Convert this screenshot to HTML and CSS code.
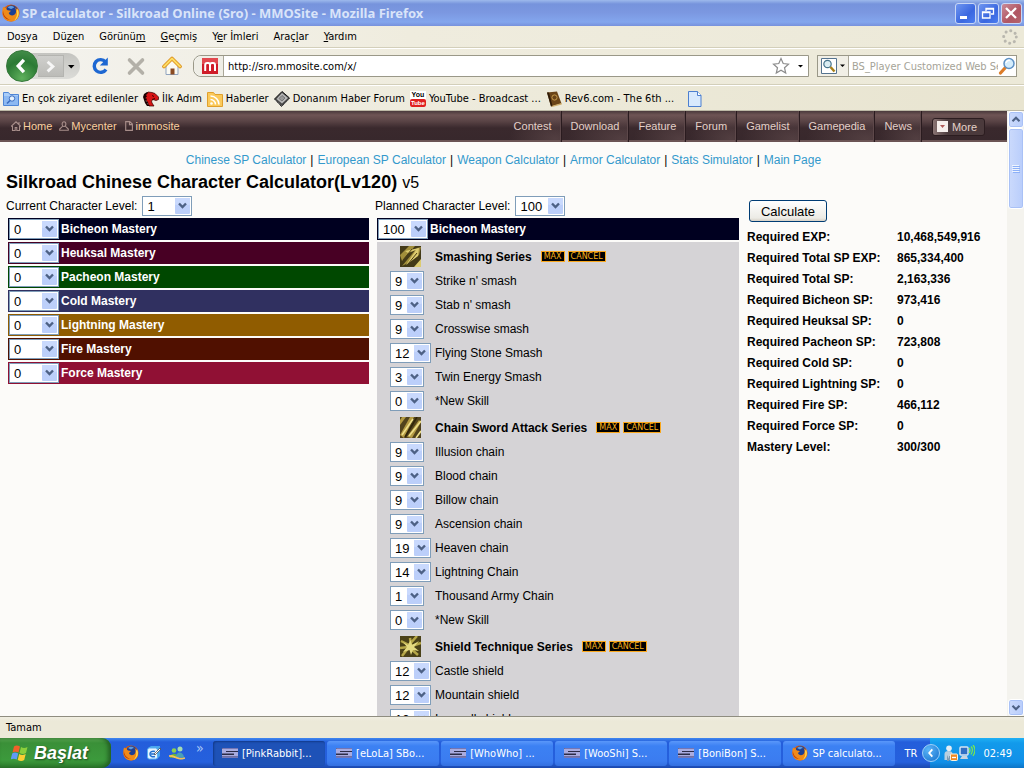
FILE: index.html
```html
<!DOCTYPE html>
<html lang="tr">
<head>
<meta charset="utf-8">
<title>SP calculator - Silkroad Online (Sro) - MMOSite</title>
<link rel="stylesheet" href="styles.css">
</head>
<body>
<svg class="defs" aria-hidden="true">
  <symbol id="firefox" viewBox="0 0 16 16">
    <circle cx="8" cy="8" r="7.6" fill="#d8590c"/>
    <circle cx="8.6" cy="6.6" r="5.6" fill="#1c3f94"/>
    <path d="M5 3c2-2 5-1.500 6 0-1 0-2 1-3 1.500z" fill="#5c9be0"/>
    <path d="M1 2.500c.8.800 2 .9 3 .8C3.600 4.300 4 5 5 5.500L8 6 6 8c.5 2.500 4.500 3 6 .5.800-1.500.7-3.500-.5-5.500 4.500 3 4.500 8 1.500 10.800C9 17 2 15.500.700 10 0 7 .4 4.500 1 2.500z" fill="#f08a18"/>
    <path d="M14 4c2 4.500.5 9-3.500 11 2-2 3.500-5 2.500-8.500z" fill="#ffd54a"/>
    <path d="M1 6c0 4 3 7.500 7 8-5 .5-8-4-7-8z" fill="#b83408"/>
  </symbol>
  <symbol id="swin" viewBox="0 0 16 16">
    <path d="M0 3h16v10H0z" fill="#2c2c48"/>
    <path d="M1 3h15v3H4v1h12v4.500H0V10h12V8.500H0V4z" fill="#a9abdf"/>
    <path d="M1 3h15v1H1zM0 11.500h16V13H0z" fill="#7476b4"/>
  </symbol>
</svg>
<div class="window">
  <header class="titlebar">
    <svg class="i18"><use href="#firefox"/></svg>
    <span class="title">SP calculator - Silkroad Online (Sro) - MMOSite - Mozilla Firefox</span>
    <button class="wbtn" aria-label="Minimize"><svg viewBox="0 0 18 18"><path d="M4 12h7v3H4z" fill="#fff"/></svg></button>
    <button class="wbtn" aria-label="Restore"><svg viewBox="0 0 18 18"><path d="M7 7V4.500h7.500V10H12M7 5h7.500M3.500 8h7.500v6H3.500zM3.500 8.700h7.500" fill="none" stroke="#fff" stroke-width="1.300"/></svg></button>
    <button class="wbtn close" aria-label="Close"><svg viewBox="0 0 18 18"><path d="M4 4l10 10M14 4L4 14" stroke="#fff" stroke-width="2.300"/></svg></button>
  </header>
  <nav class="menubar">
    <button>Do<u>s</u>ya</button><button>Dü<u>z</u>en</button><button>Görünü<u>m</u></button><button><u>G</u>eçmiş</button><button>Y<u>e</u>r İmleri</button><button>Araç<u>l</u>ar</button><button><u>Y</u>ardım</button>
    <svg class="throbber" viewBox="0 0 16 16"><circle cx="8" cy="8" r="6.300" fill="none" stroke="#b9b7ae" stroke-width="3" stroke-linecap="round" stroke-dasharray="0.100 4.848"/></svg>
  </nav>
  <div class="toolbar">
    <div class="history">
      <button class="back" aria-label="Back"><svg viewBox="0 0 32 32"><path d="M18 9.500l-6 6.500 6 6.500" fill="none" stroke="#fff" stroke-width="3.600"/></svg></button>
      <button class="fwd" aria-label="Forward"><svg viewBox="0 0 26 22"><path d="M10 6l5.500 5-5.500 5" fill="none" stroke="#f6f6f6" stroke-width="3"/></svg></button>
      <button class="drop" aria-label="History"><svg viewBox="0 0 14 14"><path d="M4 6h6.500L7.200 9.500z"/></svg></button>
    </div>
    <button class="tb" aria-label="Reload"><svg viewBox="0 0 20 20"><path d="M15.500 5.800A6.400 6.400 0 1 0 16 13.500" fill="none" stroke="#1d67d2" stroke-width="3.400"/><path d="M17.800 1.500v8h-8z" fill="#1d67d2"/></svg></button>
    <button class="tb" aria-label="Stop"><svg viewBox="0 0 20 20"><path d="M3.500 4l13 13M16.500 4l-13 13" stroke="#b3b0a8" stroke-width="3.600" stroke-linecap="round"/></svg></button>
    <button class="tb" aria-label="Home"><svg viewBox="0 0 20 20"><path d="M4 10v8.500h12V10l-6-6z" fill="#fbfaf2" stroke="#8fa3bf"/><path d="M8.500 12.500h4v6h-4z" fill="#8a4b22"/><path d="M10 2.500L2 10.500M10 2.500l8 8" stroke="#d98a13" stroke-width="3.600" stroke-linecap="round"/><path d="M10 2.500l-8 8M10 2.500l8 8" stroke="#fddc62" stroke-width="2" stroke-linecap="round"/></svg></button>
    <div class="urlbar">
      <span class="favicon"><svg viewBox="0 0 16 16"><path d="M0 0h16v16H0z" fill="#cf1c28"/><path d="M0 0h16v6H0z" fill="#e2484e"/><path d="M3.200 13V7q0-2 2-2h1q1.800 0 1.800 2v6M8 7q0-2 2-2h1q2 0 2 2v6" fill="none" stroke="#fff" stroke-width="2"/></svg></span>
      <input class="url" aria-label="Address" value="http://sro.mmosite.com/x/">
      <svg class="i18" viewBox="0 0 18 18"><path d="M9 1.500l2.200 5 5.300.6-4 3.600 1.200 5.300L9 13.300 4.300 16l1.200-5.300-4-3.600 5.300-.6z" fill="#fff" stroke="#8c8c8c" stroke-width="1.200"/></svg>
      <svg class="arrow" viewBox="0 0 14 14"><path d="M5 6h5L7.500 8.500z"/></svg>
    </div>
    <div class="search">
      <span class="engine"><svg class="i16" viewBox="0 0 16 16"><path d="M.5.500h15v15H.500z" fill="#fff" stroke="#55738f"/><circle cx="6.500" cy="6" r="3.700" fill="#d9ecf2" stroke="#46748c" stroke-width="1.200"/><path d="M9.500 9l4 4.500" stroke="#a8801a" stroke-width="2.500"/></svg><svg class="arrow" viewBox="0 0 10 14"><path d="M3 5.500h5L5.500 8z"/></svg></span>
      <input aria-label="Search" placeholder="BS_Player Customized Web Search">
      <svg class="i18" viewBox="0 0 18 18"><path d="M7 11l-4.500 5" stroke="#dc7c28" stroke-width="3.200" stroke-linecap="round"/><circle cx="11" cy="6.500" r="5" fill="#d5edfc" stroke="#5e91c4" stroke-width="1.500"/><path d="M8 6a3 3 0 0 1 4-2.500" fill="none" stroke="#fff" stroke-width="1.500"/></svg>
    </div>
  </div>
  <nav class="bookmarks">
    <a href="#"><svg class="i16" viewBox="0 0 16 16"><path d="M.5 1.500h5l1.500 2h8.500v11H.500z" fill="#a9cdf8" stroke="#4f86d6"/><path d="M1 5h14v9H1z" fill="#8db9f2"/><circle cx="9" cy="7.500" r="2.700" fill="#e6f2fd" stroke="#3a6cc0"/><path d="M7 9.500l-3 3" stroke="#3a6cc0" stroke-width="1.600"/></svg>En çok ziyaret edilenler</a>
    <a href="#"><svg class="i16" viewBox="0 0 16 16"><path d="M2 4l3-3 4 .5 3 1 3.500 3.500v2.500L13 9.500 10 8.500 8.500 10l.5 2 2 3H6l-1-3-2-3z" fill="#d81414" stroke="#300" stroke-width=".7"/><path d="M0 6l1-3 3-2 1 1-2 2 1 1.500L2 7l2 1-1.500 2L5 11l-.5 2L7 15H4l-2-3-1-3z" fill="#1c0000"/><path d="M9 4.500l2 1M9 8.500l3-1" stroke="#400"/></svg>İlk Adım</a>
    <a href="#"><svg class="i16" viewBox="0 0 16 16"><path d="M.5 1.500h6l1.500 2h7.500v12H.500z" fill="#fbc95a" stroke="#e0a02c"/><path d="M3.500 8.500a5 5 0 0 1 5 5M3.500 5a8.500 8.500 0 0 1 8.500 8.500" fill="none" stroke="#fff" stroke-width="1.600"/><circle cx="4.500" cy="12.500" r="1.300" fill="#fff"/></svg>Haberler</a>
    <a href="#"><svg class="i16" viewBox="0 0 16 16"><path d="M8 .5l7.500 6.500L7.500 15.500 .5 8z" fill="#4c4c4c" stroke="#151515"/><path d="M8 2l6 5-6 5.500L2.500 8z" fill="#b8b8b8"/><path d="M8 4.500l3 2.500-3 3-3-2.500z" fill="#999" stroke="#777"/><path d="M1 9l6.500 6M9 14.500l6-6" stroke="#bbb" stroke-dasharray="1 1"/></svg>Donanım Haber Forum</a>
    <a href="#"><span class="yt"><b>You</b><i>Tube</i></span>YouTube - Broadcast ...</a>
    <a href="#"><svg class="i16" viewBox="0 0 16 16"><path d="M1 1.500L11 .5l4.500 12L5 15.500z" fill="#6b4518"/><path d="M1 1.500l4 14 1.500-.5L3 1.500z" fill="#2f1b08"/><path d="M5.500 15l10-3 .3 1.500L6 16z" fill="#cfae6c"/><circle cx="8.500" cy="6.500" r="2.600" fill="none" stroke="#c69b4a"/></svg>Rev6.com - The 6th ...</a>
    <a href="#" class="blank" aria-label="Page"><svg class="i16" viewBox="0 0 16 16"><path d="M1.500.500h9l3.500 4v11H1.500z" fill="#d8e9fd" stroke="#4c7fd0"/><path d="M10.500.500v4H14" fill="#fff" stroke="#4c7fd0"/></svg></a>
  </nav>
  <div class="viewport">
    <main class="page">
      <header class="sitebar">
        <div class="user">
          <a href="#"><svg viewBox="0 0 10 10"><path d="M0 5.500L5 .8l5 4.700M1.500 5v4.500h2.700V6.500h1.600v3h2.700V5M8 1v2" fill="none" stroke="#a88e8a" stroke-width="1.100"/></svg>Home</a>
          <a href="#"><svg viewBox="0 0 10 10"><path d="M5 .7C2.500.700 2.500 5.500 5 5.500S7.500.700 5 .700zM3.500 5.300L.7 8v1.300h8.600V8L6.500 5.300" fill="none" stroke="#a88e8a" stroke-width="1.100"/></svg>Mycenter</a>
          <a href="#"><svg viewBox="0 0 10 10"><path d="M1.700.600h4L8.400 3v6.400H1.700zM5.500.600v3h3" fill="none" stroke="#a88e8a" stroke-width="1.100"/></svg>immosite</a>
        </div>
        <nav class="sitenav"><a href="#">Contest</a><a href="#">Download</a><a href="#">Feature</a><a href="#">Forum</a><a href="#">Gamelist</a><a href="#">Gamepedia</a><a href="#">News</a></nav>
        <button class="more"><svg viewBox="0 0 11 11"><path d="M0 0h11v11H0z" fill="#f6efec"/><path d="M3 4h5L5.500 7z" fill="#b05a58"/></svg>More</button>
      </header>
      <nav class="calclinks"><a href="#">Chinese SP Calculator</a>|<a href="#">European SP Calculator</a>|<a href="#">Weapon Calculator</a>|<a href="#">Armor Calculator</a>|<a href="#">Stats Simulator</a>|<a href="#">Main Page</a></nav>
      <h1>Silkroad Chinese Character Calculator(Lv120) <small>v5</small></h1>
      <div class="columns">
        <section>
          <div class="level"><label for="cur">Current Character Level:</label><select id="cur" class="wide"><option>1</option></select></div>
          <div class="mastery bicheon"><select id="m1" class="wide"><option>0</option></select><label for="m1">Bicheon Mastery</label></div>
          <div class="mastery heuksal"><select id="m2" class="wide"><option>0</option></select><label for="m2">Heuksal Mastery</label></div>
          <div class="mastery pacheon"><select id="m3" class="wide"><option>0</option></select><label for="m3">Pacheon Mastery</label></div>
          <div class="mastery cold"><select id="m4" class="wide"><option>0</option></select><label for="m4">Cold Mastery</label></div>
          <div class="mastery lightning"><select id="m5" class="wide"><option>0</option></select><label for="m5">Lightning Mastery</label></div>
          <div class="mastery fire"><select id="m6" class="wide"><option>0</option></select><label for="m6">Fire Mastery</label></div>
          <div class="mastery force"><select id="m7" class="wide"><option>0</option></select><label for="m7">Force Mastery</label></div>
        </section>
        <section>
          <div class="level"><label for="plan">Planned Character Level:</label><select id="plan" class="wide"><option>100</option></select></div>
          <div class="mastery bicheon"><select id="p1" class="wide"><option>100</option></select><label for="p1">Bicheon Mastery</label></div>
          <div class="skills">
            <h2><svg viewBox="0 0 21 21"><path d="M0 0h21v21H0z" fill="#433a18"/><path d="M0 9L9 0h6L2 15zM2 20L17 2l4-1-2 8-11 8z" fill="#a18e3b"/><path d="M6 19L16 4l-8 3L5 5l14-3-1 8-8 6zM14 21l7-8v8z" fill="#dccb70"/><path d="M3 14L12 3M8 18l9-11" stroke="#4b3c13"/></svg><span>Smashing Series</span><button>MAX</button><button>CANCEL</button></h2>
            <div class="skill"><select id="s1"><option>9</option></select><label for="s1">Strike n' smash</label></div>
            <div class="skill"><select id="s2"><option>9</option></select><label for="s2">Stab n' smash</label></div>
            <div class="skill"><select id="s3"><option>9</option></select><label for="s3">Crosswise smash</label></div>
            <div class="skill"><select id="s4" class="two"><option>12</option></select><label for="s4">Flying Stone Smash</label></div>
            <div class="skill"><select id="s5"><option>3</option></select><label for="s5">Twin Energy Smash</label></div>
            <div class="skill"><select id="s6"><option>0</option></select><label for="s6">*New Skill</label></div>
            <h2><svg viewBox="0 0 21 21"><path d="M0 0h21v21H0z" fill="#51431c"/><path d="M0 18L10 0h4L4 21zM7 20L19 3l2 2-9 16zM0 8l6-8H2L0 3z" fill="#b49b43"/><path d="M2 18L13 2M9 19L21 4M16 21l5-7" stroke="#eee08b" stroke-width="1.600"/><path d="M5 20L17 0" stroke="#302509" stroke-width="1.500"/></svg><span>Chain Sword Attack Series</span><button>MAX</button><button>CANCEL</button></h2>
            <div class="skill"><select id="c1"><option>9</option></select><label for="c1">Illusion chain</label></div>
            <div class="skill"><select id="c2"><option>9</option></select><label for="c2">Blood chain</label></div>
            <div class="skill"><select id="c3"><option>9</option></select><label for="c3">Billow chain</label></div>
            <div class="skill"><select id="c4"><option>9</option></select><label for="c4">Ascension chain</label></div>
            <div class="skill"><select id="c5" class="two"><option>19</option></select><label for="c5">Heaven chain</label></div>
            <div class="skill"><select id="c6" class="two"><option>14</option></select><label for="c6">Lightning Chain</label></div>
            <div class="skill"><select id="c7"><option>1</option></select><label for="c7">Thousand Army Chain</label></div>
            <div class="skill"><select id="c8"><option>0</option></select><label for="c8">*New Skill</label></div>
            <h2><svg viewBox="0 0 21 21"><path d="M0 0h21v21H0z" fill="#4a4118"/><path d="M1 5l8 4L17 0M2 20l7-9 9 8M0 12l8-1M12 10l9-3M10 2l1 7" fill="none" stroke="#b6a748" stroke-width="2.500"/><path d="M10.500 4l1.500 5 7-4-5 6 5 4-6-1-2 5-1.500-5L3 16l4-5-4-5 5 3z" fill="#e4da80"/></svg><span>Shield Technique Series</span><button>MAX</button><button>CANCEL</button></h2>
            <div class="skill"><select id="t1" class="two"><option>12</option></select><label for="t1">Castle shield</label></div>
            <div class="skill"><select id="t2" class="two"><option>12</option></select><label for="t2">Mountain shield</label></div>
            <div class="skill"><select id="t3" class="two"><option>12</option></select><label for="t3">Ironwall shield</label></div>
          </div>
        </section>
        <section>
          <button class="calc">Calculate</button>
          <table>
            <tr><th>Required EXP:</th><td>10,468,549,916</td></tr>
            <tr><th>Required Total SP EXP:</th><td>865,334,400</td></tr>
            <tr><th>Required Total SP:</th><td>2,163,336</td></tr>
            <tr><th>Required Bicheon SP:</th><td>973,416</td></tr>
            <tr><th>Required Heuksal SP:</th><td>0</td></tr>
            <tr><th>Required Pacheon SP:</th><td>723,808</td></tr>
            <tr><th>Required Cold SP:</th><td>0</td></tr>
            <tr><th>Required Lightning SP:</th><td>0</td></tr>
            <tr><th>Required Fire SP:</th><td>466,112</td></tr>
            <tr><th>Required Force SP:</th><td>0</td></tr>
            <tr><th>Mastery Level:</th><td>300/300</td></tr>
          </table>
        </section>
      </div>
    </main>
    <div class="scrollbar">
      <button class="sb" aria-label="Scroll up"><svg viewBox="0 0 16 16"><path d="M4 10l4-4 4 4" fill="none" stroke="#4d6185" stroke-width="2.400"/></svg></button>
      <div class="thumb"><svg viewBox="0 0 8 8"><path d="M0 .5h7M0 2.500h7M0 4.500h7M0 6.500h7" stroke="#eef4fe"/><path d="M1 1.500h7M1 3.500h7M1 5.500h7M1 7.500h7" stroke="#8cb0f8"/></svg></div>
      <button class="sb down" aria-label="Scroll down"><svg viewBox="0 0 16 16"><path d="M4 6l4 4 4-4" fill="none" stroke="#4d6185" stroke-width="2.400"/></svg></button>
    </div>
  </div>
  <div class="status">Tamam</div>
  <footer class="taskbar">
    <button class="start"><svg viewBox="0 0 18 18"><path d="M3 2.500c2-1.500 4-1 6 0L7.500 8.500c-2-1-4-1.300-6 0z" fill="#f0612a"/><path d="M10 3c2 1.200 4 1.300 6.500 0L15 9c-2 1.200-4 1.200-6.500 0z" fill="#8bcf3c"/><path d="M1.200 9.500c2-1.500 4-1 6 0l-1.500 6c-2-1-4-1.200-6 0z" fill="#5f9bf6"/><path d="M8.200 10c2 1.200 4 1.300 6.500 0l-1.500 6c-2 1.200-4 1.200-6.500 0z" fill="#fbce33"/></svg>Başlat</button>
    <div class="quick">
      <svg class="i16"><use href="#firefox"/></svg>
      <svg class="i16" viewBox="0 0 16 16"><path d="M2 3l3-2h9v10l-3 3H2z" fill="#4aa6ee"/><rect x="1.500" y="3" width="10" height="11" rx="2" fill="#e7f5ff" stroke="#5cb2f0"/><path d="M9 6.500C6 5.500 4 7 4 9s2 3.500 5 2.500M5 9h4" fill="none" stroke="#1f6fd0" stroke-width="1.500"/><path d="M8 9l6-6 1 1-6 6z" fill="#fff" stroke="#222" stroke-width=".6"/></svg>
      <svg class="i16" viewBox="0 0 16 16"><circle cx="5" cy="5.500" r="2.300" fill="#8ed051"/><circle cx="11" cy="4" r="2.500" fill="#a5dcb0"/><path d="M1 13c0-5 7-6 8-1z" fill="#68b53a"/><path d="M7 12c0-6 7-6 8 0v1z" fill="#4aa0b8"/><path d="M0 11c5-2 8 4 16 2-5 3-9-1-16-2z" fill="#ffc454" stroke="#ffc454"/></svg>
    </div>
    <span class="chev">»</span>
    <div class="tasks">
      <button class="task active"><svg><use href="#swin"/></svg>[PinkRabbit]...</button>
      <button class="task"><svg><use href="#swin"/></svg>[eLoLa] SBo...</button>
      <button class="task"><svg><use href="#swin"/></svg>[WhoWho] ...</button>
      <button class="task"><svg><use href="#swin"/></svg>[WooShi] S...</button>
      <button class="task"><svg><use href="#swin"/></svg>[BoniBon] S...</button>
      <button class="task"><svg><use href="#firefox"/></svg>SP calculato...</button>
    </div>
    <span class="lang">TR</span>
    <div class="tray">
      <button class="expand" aria-label="Show hidden icons"><svg viewBox="0 0 18 18"><path d="M10.500 5L7 9l3.500 4" fill="none" stroke="#fff" stroke-width="2"/></svg></button>
      <svg class="i16" viewBox="0 0 16 16"><circle cx="6" cy="3.300" r="2.800" fill="#e5edf4"/><path d="M1.500 15V9q0-3 4-3t4 3v6z" fill="#b9cfdf"/><path d="M4 10v6h2v-5h1v5" fill="#7b9ab2"/><rect x="7.500" y="9" width="7" height="6.500" rx="1" fill="#f08a24" stroke="#fff3dc"/><path d="M9 12.500h4" stroke="#fff" stroke-width="1.300"/></svg>
      <svg class="i16" viewBox="0 0 16 16"><rect x="1" y="2" width="8" height="8" rx="1" fill="#2f6fc4" stroke="#d8e5f2" stroke-width="1.500"/><path d="M3 11h5l1 3H1z" fill="#c7d3df"/><path d="M10 3q2 2 0 5M12 1.500q3 3 0 8M14 0q4 5 0 11" fill="none" stroke="#76e455" stroke-width="1.300"/></svg>
      <time>02:49</time>
    </div>
  </footer>
</div>
</body>
</html>
```
FILE: styles.css
```css
* { box-sizing: border-box; }
body { margin: 0; font: 11px "DejaVu Sans Condensed", "DejaVu Sans", sans-serif; color: #000; }
button, input, select { font: inherit; color: inherit; margin: 0; padding: 0; border: 0; background: none; }
a { color: inherit; text-decoration: none; }
svg { display: block; flex: none; }
.defs { position: absolute; width: 0; height: 0; }
.i16 { width: 16px; height: 16px; }
.i18 { width: 18px; height: 18px; }
.window { display: flex; flex-direction: column; height: 100vh; overflow: hidden; background: #ece9d8; }
.window > * { flex: none; }

.titlebar { display: flex; align-items: center; gap: 2px; height: 26px; padding: 0 2px; background: linear-gradient(#9db9ec 0, #7693dc 4px, #7b97e0 12px, #83a6ed 22px, #7791dc); }
.title { flex: 1; color: #d9e4f9; font: bold 13px "Noto Sans", sans-serif; white-space: nowrap; }
.wbtn { width: 21px; height: 21px; border: 1px solid #c8d7f6; border-radius: 3px; background: linear-gradient(135deg, #6f96f0, #3a67e0 60%, #4b7df0); }
.wbtn svg { width: 18px; height: 18px; }
.wbtn.close { background: linear-gradient(135deg, #c98b98, #b05562 60%, #b4646c); }

.menubar { display: flex; align-items: center; gap: 15px; height: 21px; padding: 0 6px 0 7px; background: linear-gradient(90deg, #f6f5f2, #efecde 40%, #ece9d8); }
.throbber { width: 16px; height: 16px; margin-left: auto; }

.toolbar { display: flex; align-items: center; height: 38px; padding: 0 7px 0 6px; border-top: 1px solid #d3cfba; border-bottom: 1px solid #d3cfba; box-shadow: inset 0 1px #fff; background: linear-gradient(90deg, #f4f3ef, #efecde 40%, #ece9d8); }
.history { display: flex; align-items: center; width: 74px; height: 26px; border-radius: 13px; background: linear-gradient(#c4c4c0, #dcdcd8); margin-right: 10px; }
.back { width: 32px; height: 32px; flex: none; border-radius: 50%; border: 1px solid #35783a; background: radial-gradient(circle at 50% 90%, #5fb05c, #2b7a34 55%, #4b9450); }
.fwd { width: 26px; height: 22px; background: linear-gradient(#cfcfcc, #bcbcb8); border: 1px solid #b4b4b0; border-left: 0; }
.drop { width: 14px; }
.tb { width: 20px; height: 20px; margin-right: 16px; }
.urlbar, .search { display: flex; align-items: center; height: 22px; border: 1px solid #9a9888; background: #fff; }
.urlbar { flex: 1; margin: 0 8px 0 -5px; border-radius: 8px 0 0 8px; }
.favicon { align-self: stretch; display: flex; align-items: center; width: 30px; padding-left: 8px; border-right: 1px solid #aaa798; border-radius: 8px 0 0 8px; background: #efeee6; }
.favicon svg { width: 16px; height: 16px; }
.url { flex: 1; min-width: 0; padding-left: 4px; }
.arrow { width: 14px; height: 14px; margin: 0 1px 0 3px; }
.search { width: 200px; }
.engine { align-self: stretch; display: flex; align-items: center; padding-left: 3px; width: 31px; flex: none; border-right: 1px solid #aaa798; background: #f1efe6; }
.engine .arrow { width: 10px; margin: 0; }
.search input { flex: 1; min-width: 0; padding-left: 3px; }
.search input::placeholder { color: #a5a397; opacity: 1; }

.bookmarks { display: flex; align-items: center; gap: 5px; height: 26px; padding: 2px 3px 0; box-shadow: inset 0 1px #fff; border-bottom: 1px solid #bdb9a6; background: linear-gradient(90deg, #f2f0e8, #ece9d8 60%, #e8e4d0); }
.bookmarks a { display: flex; align-items: center; gap: 3px; white-space: nowrap; }
.bookmarks .blank { margin-left: 8px; }
.yt { width: 16px; font: bold 7px/8px "Liberation Sans", sans-serif; text-align: center; background: #fff; }
.yt b, .yt i { display: block; font-style: normal; }
.yt i { background: #e02020; color: #fff; font-size: 6px; border-radius: 2px; }

.viewport { display: flex; min-height: 0; background: #fcfbf9; }
.window > .viewport { flex: 1; }
.page { flex: 1; min-width: 0; overflow: hidden; font: 12px "Liberation Sans", Arial, sans-serif; }
.sitebar { display: flex; align-items: stretch; height: 31px; padding: 0 22px 0 11px; color: #e3d0c8; font-size: 11px; background: linear-gradient(#4a3a3c, #6e5454 4px, #5a4446 10px, #3a292d 17px, #38282c 29px, #6b5455 29px); }
.user { display: flex; align-items: center; gap: 7px; flex: 1; padding-bottom: 1px; color: #f9cf9f; }
.user a { display: flex; align-items: center; gap: 2px; }
.user svg { width: 10px; height: 10px; }
.sitenav { display: flex; }
.sitenav a { display: flex; align-items: center; padding: 0 9px 1px; border-right: 1px solid #2a1b1f; box-shadow: inset -1px 0 #5d484a; background: radial-gradient(ellipse at 90% 90%, #6b545580, transparent 65%); }
.more { display: flex; align-items: center; align-self: center; gap: 4px; height: 18px; padding: 0 7px 0 4px; margin-left: 10px; border: 1px solid #2c1d20; border-radius: 3px; background: linear-gradient(90deg, #8a7473, #4b3a3c 30%, #4b3a3c); }
.more svg { width: 11px; height: 11px; }
.calclinks { display: flex; justify-content: center; gap: 4px; margin-top: 10px; line-height: 16px; }
.calclinks a { color: #3399cc; }
h1 { margin: 3px 6px 1px; font-size: 18px; line-height: 22px; }
h1 small { font-size: 16px; font-weight: normal; }
.columns { display: grid; grid-template-columns: 369fr 372fr 260fr; padding-left: 6px; }
.level { display: flex; align-items: center; gap: 5px; height: 22px; margin-bottom: 1px; }
select { appearance: none; width: 34px; height: 20px; padding: 0 0 0 4px; border: 1px solid #7f9db9; border-radius: 0; color: #000; font-size: 13px;
  background: #fff url("data:image/svg+xml,%3Csvg xmlns='http://www.w3.org/2000/svg' width='15' height='16'%3E%3Crect width='15' height='16' rx='1' fill='%23bccffa'/%3E%3Crect width='15' height='7' rx='1' fill='%23c9d9fd'/%3E%3Cpath d='M4 5.500l3.500 3.500 3.500-3.500' fill='none' stroke='%234d6185' stroke-width='2.400'/%3E%3C/svg%3E") no-repeat right 1px center; }
select.two { width: 41px; }
select.wide { width: 50px; }
.mastery { display: flex; align-items: center; gap: 2px; height: 22px; margin: 0 6px 2px 2px; padding-left: 1px; color: #fff; font-weight: bold; }
.columns section:nth-child(2) .mastery, .skills { margin-right: 8px; }
.mastery select { font-weight: normal; }
.bicheon { background: #000020; }
.heuksal { background: #480024; }
.pacheon { background: #004800; }
.cold { background: #303060; }
.lightning { background: #905c00; }
.fire { background: #501000; }
.force { background: #901034; }
.skills { margin-left: 2px; background: #d5d3d6; }
.skills h2 { display: flex; align-items: center; height: 27px; margin: 0; padding: 2px 0 0 23px; font-size: 12px; }
.skills h2 svg { width: 21px; height: 21px; margin-right: 14px; }
.skills h2 span { margin-right: 9px; }
.skills h2 button { height: 11px; margin-right: 3px; padding: 0 2px; border: 1px solid #f9a71c; background: #000; color: #f9b21c; font: 8px/9px "DejaVu Sans", sans-serif; }
.skill { display: flex; align-items: center; height: 24px; padding-left: 13px; }
.skill select { margin-right: 11px; }
.skill select.two { margin-right: 4px; }
.calc { width: 78px; height: 22px; margin: 5px 2px 4px; border: 1px solid #003c74; border-radius: 3px; background: linear-gradient(#fff, #ecebe5 85%, #d6d0c5); font-size: 13px; }
table { border-collapse: collapse; font-weight: bold; }
th, td { height: 21px; padding: 0; text-align: left; }
th { width: 150px; }

.scrollbar { display: flex; flex-direction: column; width: 17px; padding-left: 1px; background: #f4f3ee; }
.sb, .thumb { width: 16px; border: 1px solid #fff; border-radius: 3px; background: linear-gradient(90deg, #cbdafc, #b9cdfb); box-shadow: inset 0 0 0 1px #a9c1f6; }
.sb { height: 17px; }
.sb svg { width: 14px; height: 15px; }
.thumb { display: flex; align-items: center; justify-content: center; height: 81px; }
.thumb svg { width: 8px; height: 8px; }
.down { margin-top: auto; }

.status { height: 22px; padding: 0 6px; border-top: 1px solid #8f8d80; line-height: 21px; background: linear-gradient(#f1efe2, #ece9d8 4px); }
.taskbar { display: flex; align-items: center; height: 30px; color: #fff; background: linear-gradient(#3f87f0, #245edb 4px, #2560dd 24px, #1b48ad); }
.start { display: flex; align-items: center; gap: 5px; align-self: stretch; width: 111px; padding-left: 11px; border-radius: 0 9px 9px 0; color: #fff; font: italic bold 18px "Liberation Sans", sans-serif; text-shadow: 1px 1px 2px #1c4a1c; background: linear-gradient(#5eac56, #3a9038 5px, #3c9a3c 22px, #2b7a2b); box-shadow: inset -3px 0 4px #236023; }
.start svg { width: 18px; height: 18px; }
.quick { display: flex; gap: 7px; margin-left: 12px; }
.chev { width: 13px; margin: 0 4px 0 11px; color: #a9c8f8; font-size: 14px; line-height: 8px; height: 18px; }
.tasks { display: flex; gap: 2px; flex: 1; min-width: 0; height: 25px; margin-right: 9px; }
.task { display: flex; align-items: center; gap: 4px; flex: 1; min-width: 0; padding-left: 9px; border-radius: 3px; color: #fff; white-space: nowrap; background: linear-gradient(#5a97fa, #3c81f3 5px, #3b7cf0 20px, #3470e0); }
.task.active { background: #1e52b7; box-shadow: inset 1px 1px 2px #123a8a; }
.task svg { width: 16px; height: 16px; }
.lang { width: 26px; }
.tray { display: flex; align-items: center; align-self: stretch; padding-right: 12px; background: linear-gradient(#1fb0f4, #129aeb 5px, #1190e8 24px, #0d74c6); }
.expand { width: 18px; height: 18px; margin: 0 3px 0 -8px; border-radius: 50%; border: 1px solid #9fd0f8; background: radial-gradient(circle at 35% 30%, #5cb5f8, #1470cc); }
.expand svg { width: 16px; height: 16px; }
.tray time { margin-left: 8px; }
```
